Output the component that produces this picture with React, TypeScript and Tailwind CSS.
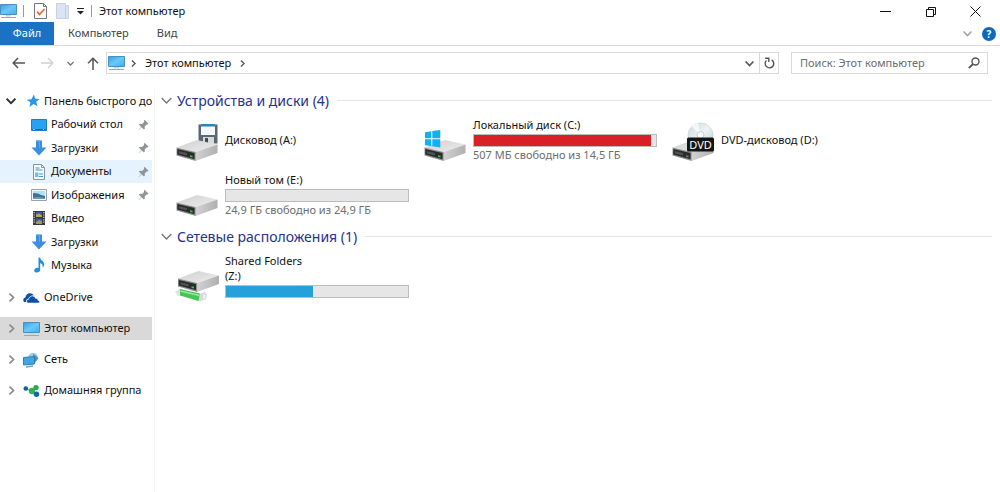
import type { ReactNode } from "react";

function Svg({ w, h, box, className = "", children }: { w: number; h: number; box?: string; className?: string; children: ReactNode }) {
  return (
    <svg width={w} height={h} viewBox={box ?? `0 0 ${w} ${h}`} fill="none" aria-hidden="true" className={`shrink-0 ${className}`}>
      {children}
    </svg>
  );
}

function Gradients() {
  return (
    <svg width="0" height="0" className="absolute" aria-hidden="true">
      <defs>
        <linearGradient id="screen" x1="0" y1="0" x2="1" y2="1">
          <stop offset="0" stopColor="#2fa0e6" />
          <stop offset="0.5" stopColor="#6cc8f7" />
          <stop offset="1" stopColor="#38b0f0" />
        </linearGradient>
        <linearGradient id="lid" x1="0" y1="0" x2="1" y2="1">
          <stop offset="0" stopColor="#cfcfcf" />
          <stop offset="1" stopColor="#eeeeee" />
        </linearGradient>
        <linearGradient id="side" x1="0" y1="0" x2="1" y2="0">
          <stop offset="0" stopColor="#d2d2d2" />
          <stop offset="1" stopColor="#b0b0b0" />
        </linearGradient>
        <linearGradient id="disc" x1="0" y1="0" x2="1" y2="1">
          <stop offset="0" stopColor="#c9d6d8" />
          <stop offset="0.5" stopColor="#eef4f5" />
          <stop offset="1" stopColor="#bccbce" />
        </linearGradient>
      </defs>
    </svg>
  );
}

const PcIcon = () => (
  <Svg w={17} h={16}>
    <path d="M.5 1.500h16v10H.5z" fill="url(#screen)" stroke="#4a90bd" />
    <path d="M6 12h5v1.500H6z" fill="#b9d9ea" />
    <path d="M1 14.500h15" stroke="#7db0cc" />
  </Svg>
);
const DesktopIcon = () => (
  <Svg w={16} h={14}>
    <path d="M.5 1.500h15v11H.5z" fill="#27a2f2" stroke="#1b7ec6" />
    <path d="M1 11.500h14" stroke="#1465a3" />
    <path d="M2 11.500h2m8 0h1" stroke="#8fd0f8" />
  </Svg>
);
const DownIcon = () => (
  <Svg w={16} h={16}>
    <path d="M5 .5h6v7h4.500L8 15.500.5 7.500H5z" fill="#3b8fe0" />
    <path d="M5.500 1h3v7" stroke="#5da8ee" />
  </Svg>
);
const DocIcon = () => (
  <Svg w={16} h={16}>
    <path d="M2.500.5h8l3 3v12h-11z" fill="#f7fafc" stroke="#8a949b" />
    <path d="M10.500.5v3h3" stroke="#8a949b" />
    <path d="M4.500 4h4M4.500 6h7M8 10h4M8 12.500h4" stroke="#3c9ad6" />
    <path d="M4 8.500h3.500V13H4z" fill="#77bde6" />
  </Svg>
);
const PictureIcon = () => (
  <Svg w={16} h={14}>
    <path d="M.5 1.500h15v11H.5z" fill="#f5f7f8" stroke="#9aa1a6" />
    <path d="M2 3h12v8H2z" fill="#b6def4" />
    <path d="M2 5l5 .5 3 1.500 4 1v2H2z" fill="#3a7298" />
    <path d="M2 9.500l6-.5 6 1v1H2z" fill="#6d9dbb" />
  </Svg>
);
const VideoIcon = () => (
  <Svg w={16} h={16}>
    <path d="M2 1h12v14H2z" fill="#39373a" />
    <path d="M3.200 2v12M12.800 2v12" stroke="#d9d9d9" strokeWidth="1.200" strokeDasharray="1.200 1.200" />
    <path d="M5 2h6v5H5z" fill="#3b58b8" />
    <path d="M5 4.500l3-1 3 2V7H5z" fill="#b3a94b" />
    <path d="M5 8.500h6V14H5z" fill="#3b58b8" />
    <path d="M5 12l3-2 3 1v3H5z" fill="#9d9a55" />
  </Svg>
);
const MusicIcon = () => (
  <Svg w={16} h={16}>
    <path d="M7.500.5h1.700c.3 3 4 3.600 4 6.800 0 1.500-.7 2.700-1.500 3.500.4-2.700-.6-4-2.500-4.700v6.600c0 1.700-1.600 2.800-3.400 2.800-1.600 0-2.600-.9-2.600-2.100 0-1.500 1.600-2.600 3.300-2.600.4 0 .7 0 1 .1z" fill="#1e90e0" />
  </Svg>
);
const StarIcon = () => (
  <Svg w={14} h={14}>
    <path d="M7.800.5l1.500 4.200 4.300.4-3.400 2.700 1.300 4.500-3.900-2.400L3.500 13l.9-4.700L.6 5.700l4.900-.5z" fill="#2a97e3" />
  </Svg>
);
const OneDriveIcon = () => (
  <Svg w={17} h={12}>
    <path d="M1.500 10C.6 9.600.2 8.800.3 7.900c.1-1.300 1-2.200 2.200-2.300.2-2.600 2-4.400 4.400-4.400 1.700 0 3 .8 3.800 2.200-2.900-.2-4.600 1.300-5.200 3.400-1.700.2-2.800 1.500-2.300 3.200z" fill="#0c4fa3" />
    <path d="M5.500 11c-1.100 0-1.900-.8-1.900-1.800S4.400 7.400 5.600 7.300C5.900 5.300 7.400 4 9.200 4c1.500 0 2.700.9 3.200 2.300 1.500 0 2.500.8 2.600 2.100 1 .1 1.500.6 1.500 1.300S16 11 15.200 11z" fill="#0c4fa3" stroke="#fff" strokeWidth=".5" />
  </Svg>
);
const NetworkIcon = () => (
  <Svg w={17} h={16}>
    <circle cx="10" cy="5.500" r="4.800" fill="#a5cfe8" />
    <path d="M10 1.500l5.500 4.500-4.500 6z" fill="#4b91ba" />
    <path d="M.5 5.500l11-1v7.500l-11 1z" fill="#38a8e6" stroke="#397ba3" />
    <path d="M3 15l7-1" stroke="#67a5c7" strokeWidth="1.500" />
  </Svg>
);
const HomegroupIcon = () => (
  <Svg w={17} h={14}>
    <path d="M3 5l7 2 3-4M10 7l3 4" stroke="#7cb8c8" strokeWidth="1.500" />
    <circle cx="2.800" cy="4.500" r="2.300" fill="#14619b" />
    <circle cx="9" cy="7" r="3.200" fill="#35b44a" />
    <circle cx="13" cy="3.600" r="2.700" fill="#27a85a" />
    <circle cx="13.500" cy="10.300" r="2.700" fill="#1465a8" />
  </Svg>
);
const PinIcon = () => (
  <Svg w={11} h={12}>
    <path d="M6.500.8l4 4-1 .7-.8-.1-2 2.100.1 2.300-.9.8-2.400-2.400L.8 11.200l-.3-.3 2.700-2.900L.9 5.700l.8-.9 2.400.1 2-2-.2-.9z" fill="#8e9499" />
  </Svg>
);

function Chevron({ dir, color = "#555", size = 8, weight = 1.5 }: { dir: "right" | "down"; color?: string; size?: number; weight?: number }) {
  return (
    <Svg w={size} h={size} box="0 0 8 8">
      <path d={dir === "right" ? "M2.200.5L5.800 4 2.200 7.500" : "M.5 2.200L4 5.800 7.500 2.200"} stroke={color} strokeWidth={weight} />
    </Svg>
  );
}

function DriveBody({ green = true }: { green?: boolean }) {
  return (
    <>
      <path d="M1.500 29.500L22 22l20.500 4.500-21.800 7.500z" fill="url(#lid)" />
      <path d="M20.700 34l21.800-7.500V35l-21.800 8z" fill="url(#side)" />
      <path d="M1.500 29.500L20.700 34v9L1.500 37.500z" fill="#8f8f8f" />
      <path d="M2.300 31l17.200 4v6.200L2.300 36.600z" fill="#2a2c2b" />
      <path d="M4 33.200l8 1.900v2.300l-8-2z" fill="#4f5352" />
      <path d="M15 37.200l2.500.6v1.700l-2.500-.6z" fill={green ? "#3cc04b" : "#6c7770"} />
    </>
  );
}

const FloppyDrive = () => (
  <Svg w={44} h={44}>
    <path d="M23.500 6.500h19v19h-17l-2-2z" fill="#5b6770" />
    <path d="M26 8h14v9H26z" fill="#f4f6f7" />
    <path d="M26 6h14v2.500H26z" fill="#2586c4" />
    <path d="M28 19h11v7H28z" fill="#d5dadd" />
    <path d="M30 20h3v5h-3z" fill="#414a50" />
    <DriveBody />
  </Svg>
);
const WindowsDrive = () => (
  <Svg w={44} h={44}>
    <DriveBody />
    <path d="M2 14.200l6.300-.9v7H2zM9.300 13.100l8-1.100v8.300h-8zM2 21.300h6.300v6.800L2 27.300zM9.300 21.300h8v8.200l-8-1.200z" fill="#12b0ee" />
  </Svg>
);
const DvdDrive = () => (
  <Svg w={44} h={44}>
    <DriveBody green={false} />
    <circle cx="29.500" cy="17.500" r="12.500" fill="url(#disc)" stroke="#cfdadc" />
    <path d="M29.500 17.500L20 8a13 13 0 017-3z" fill="#fff" opacity=".7" />
    <circle cx="29.500" cy="17" r="3.500" fill="#f8fbfb" stroke="#c3d0d3" />
    <rect x="16" y="19.500" width="27" height="14" rx="1.500" fill="#141414" />
    <text x="29.500" y="30.500" textAnchor="middle" fontFamily="Noto Sans, sans-serif" fontSize="11" fill="#fff">DVD</text>
  </Svg>
);
const PlainDrive = () => (
  <Svg w={44} h={44}>
    <DriveBody />
  </Svg>
);
const NetworkDrive = () => (
  <Svg w={44} h={52}>
    <g transform="translate(1.500 -1)">
      <DriveBody />
    </g>
    <path d="M0 42l4-3.500 4 1-1 6-4 .5z" fill="#dfe5e2" />
    <path d="M22 45l8-3 2 3-1 4-6 2.500-3-1z" fill="#d5dbd8" />
    <path d="M28 44l3 1-1 3.500-2 .5z" fill="#eef1f0" />
    <path d="M5 39l20 4.500-1.500 7.500L5 45.500z" fill="#45c654" />
    <path d="M5.500 41l19 4.500" stroke="#98e8a0" strokeWidth="1.500" />
  </Svg>
);

function QuickRow({ icon, label, pinned, hot }: { icon: ReactNode; label: string; pinned?: boolean; hot?: boolean }) {
  return (
    <li className="min-h-0">
      <a href="#" className={`flex h-full items-center pl-[31px] pr-[3px] ${hot ? "bg-[#e5f3ff]" : ""}`}>
        <span className="flex w-5 shrink-0">{icon}</span>
        <span className="flex-1 whitespace-nowrap">{label}</span>
        {pinned && <PinIcon />}
      </a>
    </li>
  );
}

function RootRow({ icon, label, selected }: { icon: ReactNode; label: string; selected?: boolean }) {
  return (
    <li>
      <a href="#" className={`flex h-[23px] items-center pl-[7px] ${selected ? "bg-[#d9d9d9]" : ""}`}>
        <span className="flex w-4 shrink-0">
          <Chevron dir="right" color="#8c8c8c" size={9} />
        </span>
        <span className="flex w-[21px] shrink-0">{icon}</span>
        <span className="whitespace-nowrap">{label}</span>
      </a>
    </li>
  );
}

function GroupTitle({ children }: { children: ReactNode }) {
  return (
    <h2 className="flex h-[23px] items-center text-sm text-[#26318c]">
      <button type="button" className="flex items-center gap-[5px] whitespace-nowrap">
        <Chevron dir="down" color="#777" size={11} weight={1} />
        {children}
      </button>
      <span className="ml-2 h-px flex-1 bg-[#e4e4e4]" />
    </h2>
  );
}

function Drive({ icon, name, note, used, full }: { icon: ReactNode; name: ReactNode; note?: string; used?: number; full?: boolean }) {
  return (
    <li className="flex h-[55px] items-center gap-[6px]">
      {icon}
      <div className="w-[184px] leading-[15px]">
        <div>{name}</div>
        {used !== undefined && (
          <div role="progressbar" aria-valuenow={used} className="mt-[2px] h-[13px] border border-[#bcbcbc] bg-[#e6e6e6]">
            <div className={`h-full ${full ? "bg-[#da2027]" : "bg-[#26a0da]"}`} style={{ width: `${used}%` }} />
          </div>
        )}
        {note && <div className="text-[#6d6d6d]">{note}</div>}
      </div>
    </li>
  );
}

export default function App() {
  return (
    <div className="flex min-h-screen flex-col bg-white font-['Noto_Sans','Open_Sans',sans-serif] text-[11px] text-[#111]">
      <Gradients />
      <header>
        <div className="flex h-[22px] items-center">
          <PcIcon />
          <span className="ml-[6px] h-3 w-px bg-[#999]" />
          <button type="button" aria-label="Свойства" className="ml-[10px]">
            <Svg w={13} h={16}>
              <path d="M.5.5h9l3 3v12H.5z" fill="#fff" stroke="#777" />
              <path d="M9.500.5v3h3" stroke="#777" />
              <path d="M3 8.500l2.500 3 5-5.500" stroke="#df6a35" strokeWidth="1.800" />
            </Svg>
          </button>
          <button type="button" aria-label="Новая папка" className="ml-[9px]">
            <Svg w={13} h={16}>
              <path d="M.5.5h9v2h3v13H.5z" fill="#dce3f2" stroke="#c8d0e4" />
              <path d="M9.500 3v12" stroke="#c3cce2" />
            </Svg>
          </button>
          <button type="button" aria-label="Настройка панели" className="ml-2">
            <Svg w={7} h={8}>
              <path d="M0 1.500h7" stroke="#222" />
              <path d="M0 4h7L3.500 7.500z" fill="#222" />
            </Svg>
          </button>
          <span className="ml-[7px] h-3 w-px bg-[#999]" />
          <h1 className="ml-[7px] flex-1">Этот компьютер</h1>
          <div className="flex items-center gap-[34px] pr-[19px]">
            <button type="button" aria-label="Свернуть">
              <Svg w={11} h={11}><path d="M0 5.500h11" stroke="#111" /></Svg>
            </button>
            <button type="button" aria-label="Развернуть">
              <Svg w={11} h={11}><path d="M1.500 3.500h7v7h-7zM3.500 3.500v-2h7v7h-2" stroke="#111" /></Svg>
            </button>
            <button type="button" aria-label="Закрыть">
              <Svg w={11} h={11}><path d="M.5.5l10 10M10.500.5l-10 10" stroke="#111" /></Svg>
            </button>
          </div>
        </div>
        <div className="flex h-6 items-stretch border-b border-[#dadada]">
          <button type="button" className="w-[54px] bg-[#1b72c4] text-white">Файл</button>
          <button type="button" className="ml-[14px] text-[#444]">Компьютер</button>
          <button type="button" className="ml-7 text-[#444]">Вид</button>
          <div className="ml-auto flex items-center gap-[10px] pr-1">
            <button type="button" aria-label="Свернуть ленту"><Chevron dir="down" color="#a5a5a5" size={9} /></button>
            <button type="button" aria-label="Справка" className="grid size-[14px] place-items-center rounded-full bg-[#0d69c0] text-[10px] font-bold leading-none text-white">?</button>
          </div>
        </div>
        <div className="flex h-[34px] items-center pr-3">
          <button type="button" aria-label="Назад" className="ml-3">
            <Svg w={13} h={12}><path d="M13 6H1.500M6 1L1.200 6 6 11" stroke="#555" strokeWidth="1.500" /></Svg>
          </button>
          <button type="button" aria-label="Вперёд" className="ml-4">
            <Svg w={13} h={12}><path d="M0 6h11.500M7 1l4.800 5L7 11" stroke="#d0d0d0" strokeWidth="1.300" /></Svg>
          </button>
          <button type="button" aria-label="Последние расположения" className="ml-[13px]"><Chevron dir="down" color="#777" size={7} /></button>
          <button type="button" aria-label="Вверх" className="ml-[13px]">
            <Svg w={12} h={13}><path d="M6 13V1.500M1 6.200L6 1.200l5 5" stroke="#555" strokeWidth="1.500" /></Svg>
          </button>
          <div className="ml-[7px] flex h-[22px] flex-1 items-center border border-[#d9d9d9] pl-px">
            <PcIcon />
            <span className="ml-[5px] flex"><Chevron dir="right" size={7} /></span>
            <span className="ml-2">Этот компьютер</span>
            <span className="ml-2 flex"><Chevron dir="right" size={7} /></span>
            <button type="button" aria-label="Журнал" className="ml-auto mr-[5px]"><Chevron dir="down" size={9} /></button>
            <button type="button" aria-label="Обновить" className="grid h-full w-[19px] place-items-center border-l border-[#d9d9d9]">
              <Svg w={11} h={12}>
                <path d="M7.600 2.800A4.300 4.300 0 112.400 3.500" stroke="#555" strokeWidth="1.400" />
                <path d="M1.200 1.300h3.600v3.600" stroke="#555" strokeWidth="1.400" />
              </Svg>
            </button>
          </div>
          <label className="ml-3 flex h-[22px] w-[197px] items-center border border-[#d9d9d9] pl-2 pr-[7px]">
            <input type="text" aria-label="Поиск" placeholder="Поиск: Этот компьютер" className="min-w-0 flex-1 outline-none placeholder:text-[#6d6d6d]" />
            <Svg w={12} h={12}>
              <circle cx="7.500" cy="4.500" r="3.500" stroke="#555" strokeWidth="1.400" />
              <path d="M5 7L.8 11.200" stroke="#555" strokeWidth="1.800" />
            </Svg>
          </label>
        </div>
      </header>
      <div className="flex flex-1 pt-[9px]">
        <nav aria-label="Область навигации" className="w-[155px] shrink-0 border-r border-[#f5f5f5] pr-[2px]">
          <a href="#" className="flex h-6 items-center overflow-hidden pl-[6px]">
            <span className="flex w-5 shrink-0"><Chevron dir="down" color="#333" size={10} /></span>
            <span className="flex w-[18px] shrink-0"><StarIcon /></span>
            <span className="overflow-hidden whitespace-nowrap">Панель быстрого доступа</span>
          </a>
          <ul className="grid h-[164px] grid-rows-7">
            <QuickRow icon={<DesktopIcon />} label="Рабочий стол" pinned />
            <QuickRow icon={<DownIcon />} label="Загрузки" pinned />
            <QuickRow icon={<DocIcon />} label="Документы" pinned hot />
            <QuickRow icon={<PictureIcon />} label="Изображения" pinned />
            <QuickRow icon={<VideoIcon />} label="Видео" />
            <QuickRow icon={<DownIcon />} label="Загрузки" />
            <QuickRow icon={<MusicIcon />} label="Музыка" />
          </ul>
          <ul className="mt-[9px] flex flex-col gap-2">
            <RootRow icon={<OneDriveIcon />} label="OneDrive" />
            <RootRow icon={<PcIcon />} label="Этот компьютер" selected />
            <RootRow icon={<NetworkIcon />} label="Сеть" />
            <RootRow icon={<HomegroupIcon />} label="Домашняя группа" />
          </ul>
        </nav>
        <main className="min-w-0 flex-1 pl-[6px] pr-2">
          <GroupTitle>Устройства и диски (4)</GroupTitle>
          <ul className="grid grid-cols-[repeat(auto-fill,248px)] pl-[14px]">
            <Drive icon={<FloppyDrive />} name="Дисковод (A:)" />
            <Drive icon={<WindowsDrive />} name="Локальный диск (C:)" used={97} full note="507 МБ свободно из 14,5 ГБ" />
            <Drive icon={<DvdDrive />} name="DVD-дисковод (D:)" />
            <Drive icon={<PlainDrive />} name="Новый том (E:)" used={0} note="24,9 ГБ свободно из 24,9 ГБ" />
          </ul>
          <div className="pt-[3px]">
            <GroupTitle>Сетевые расположения (1)</GroupTitle>
          </div>
          <ul className="grid grid-cols-[repeat(auto-fill,248px)] pl-[14px]">
            <Drive icon={<NetworkDrive />} name={<>Shared Folders<br />(Z:)</>} used={48} />
          </ul>
        </main>
      </div>
    </div>
  );
}
